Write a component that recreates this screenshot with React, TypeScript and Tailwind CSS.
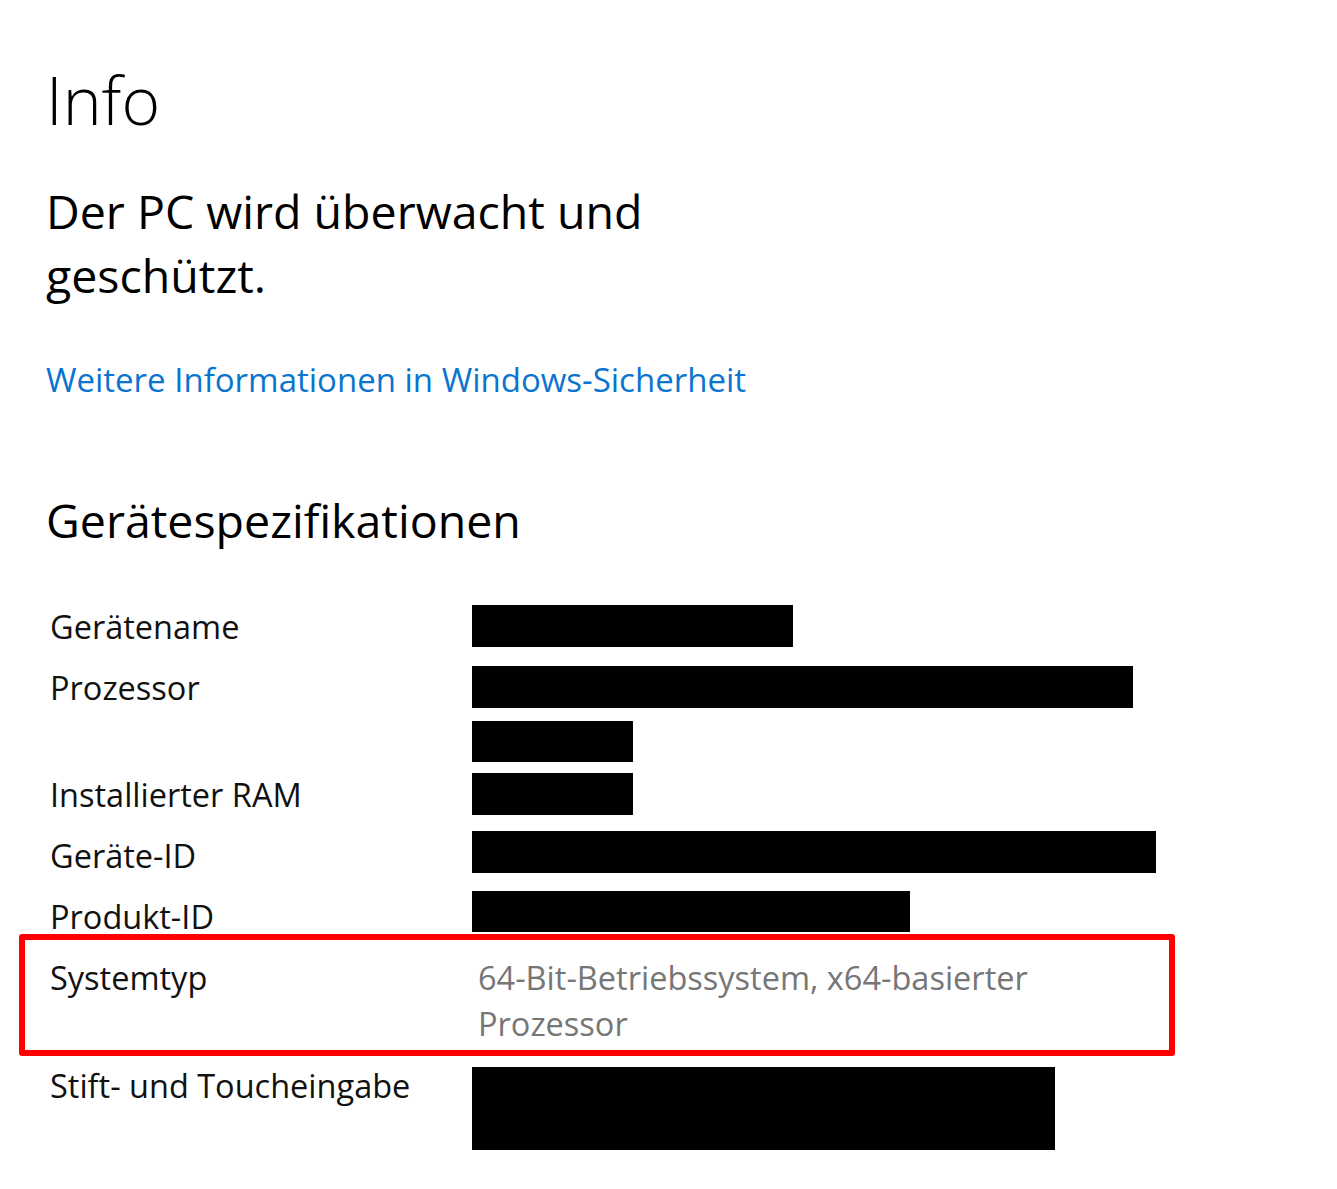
import React from 'react';

interface SpecRow {
  label: string;
  // redaction boxes: width, height, top offset, bottom offset
  boxes: { w: number; h: number; mt: number; mb?: number }[];
}

const rows: SpecRow[] = [
  { label: 'Gerätename', boxes: [{ w: 321, h: 42, mt: 1 }] },
  { label: 'Prozessor', boxes: [{ w: 661, h: 42, mt: 1 }, { w: 161, h: 41, mt: 13, mb: -5 }] },
  { label: 'Installierter RAM', boxes: [{ w: 161, h: 42, mt: 1 }] },
  { label: 'Geräte-ID', boxes: [{ w: 684, h: 42, mt: -2 }] },
  { label: 'Produkt-ID', boxes: [{ w: 438, h: 41, mt: -3 }] },
];

const font = { fontFamily: '"Open Sans", "Noto Sans", Arial, sans-serif' };

const Row: React.FC<{ row: SpecRow }> = ({ row }) => (
  <div className="flex">
    <div className="w-[422px] shrink-0 text-[32.5px] leading-[46px] text-[#111]">{row.label}</div>
    <div className="flex flex-col">
      {row.boxes.map((b, i) => (
        <div
          key={i}
          className="bg-black"
          style={{ width: b.w, height: b.h, marginTop: b.mt, marginBottom: b.mb ?? 0 }}
        />
      ))}
    </div>
  </div>
);

export default function App() {
  return (
    <div className="min-h-[1189px] w-[1337px] bg-white pl-[46px] pt-[54px]" style={font}>
      <h1 className="text-[66px] font-light leading-[90px] text-black">Info</h1>

      <p className="mt-[35px] w-[660px] text-[46.5px] leading-[64px] text-black">
        Der PC wird überwacht und
        <br />
        geschützt.
      </p>

      <a className="mt-[50px] block text-[33px] leading-[46px] text-[#0a74d0]">
        Weitere Informationen in Windows-Sicherheit
      </a>

      <h2 className="mt-[89px] text-[46.5px] leading-[56px] text-black">Gerätespezifikationen</h2>

      <div className="mt-[56px] ml-[4px] flex flex-col gap-[15px]">
        {rows.map((r) => (
          <Row key={r.label} row={r} />
        ))}

        <div className="-mt-[21px] -mb-[8px] -ml-[31px] w-[1156px] rounded-[3px] border-[6px] border-[#ff0000] pt-[15px] pb-[3px] pl-[25px]">
          <div className="flex">
            <div className="w-[422px] shrink-0 text-[32.5px] leading-[46px] text-[#111]">Systemtyp</div>
            <div className="w-[620px] pl-[6px] text-[32.5px] leading-[46px] text-[#767676]">
              64-Bit-Betriebssystem, x64-basierter
              <br />
              Prozessor
            </div>
          </div>
        </div>

        <div className="flex">
          <div className="w-[422px] shrink-0 text-[32.5px] leading-[46px] text-[#111]">Stift- und Toucheingabe</div>
          <div className="mt-[4px] h-[83px] w-[583px] bg-black" />
        </div>
      </div>
    </div>
  );
}
